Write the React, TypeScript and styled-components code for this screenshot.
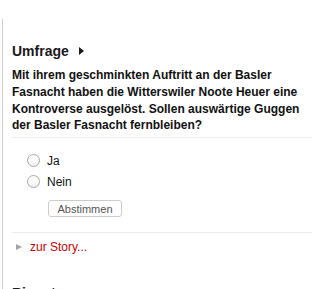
import styled, { createGlobalStyle } from "styled-components";

const GlobalStyle = createGlobalStyle`
  html, body {
    margin: 0;
    padding: 0;
    background: #fff;
  }
  body {
    font-family: "Liberation Sans", Arial, sans-serif;
    color: #000;
    overflow: hidden;
  }
`;

const Column = styled.div`
  box-sizing: border-box;
  margin: 19px 0 0 2px;
  border-left: 1px solid #cfcfcf;
  padding: 24px 6px 0 9px;
  height: 270px;
  overflow: hidden;
`;

const Title = styled.h2`
  display: flex;
  align-items: center;
  gap: 10px;
  margin: 0;
  font-size: 14px;
  line-height: 16px;
  font-weight: bold;
  color: #1a1a1a;
`;

const TitleArrow = styled.span`
  width: 0;
  height: 0;
  border-top: 4px solid transparent;
  border-bottom: 4px solid transparent;
  border-left: 5px solid #1a1a1a;
`;

const Question = styled.p`
  margin: 8px 0 3px;
  font-size: 12px;
  line-height: 16.8px;
  font-weight: bold;
  color: #111;
`;

const Divider = styled.div`
  height: 1px;
  background: #ebebeb;
`;

const Options = styled.div`
  display: flex;
  flex-direction: column;
  padding: 12px 0 0 15px;
`;

const Option = styled.label`
  display: flex;
  align-items: center;
  gap: 7px;
  height: 21px;
  font-size: 12px;
  color: #111;
`;

const Radio = styled.span`
  box-sizing: border-box;
  width: 13px;
  height: 13px;
  border-radius: 50%;
  border: 1px solid #a8a8a8;
  background: linear-gradient(#ffffff, #f3f3f3);
`;

const VoteButton = styled.button`
  box-sizing: border-box;
  margin: 8px 0 15px 21px;
  align-self: flex-start;
  width: 74px;
  height: 17px;
  padding: 0;
  border: 1px solid #cccccc;
  border-radius: 3px;
  background: #fff;
  font-family: "Liberation Sans", Arial, sans-serif;
  font-size: 11px;
  color: #555;
`;

const StoryLink = styled.a`
  display: flex;
  align-items: center;
  gap: 8px;
  margin: 6px 0 0 4px;
  font-size: 12px;
  line-height: 16px;
  color: #cc0000;
  text-decoration: none;
`;

const StoryArrow = styled.span`
  width: 0;
  height: 0;
  border-top: 3.5px solid transparent;
  border-bottom: 3.5px solid transparent;
  border-left: 6px solid #a3a3a3;
`;

const NextTitle = styled.h2`
  margin: 30px 0 0;
  font-size: 14px;
  line-height: 16px;
  font-weight: bold;
  color: #1a1a1a;
`;

function App() {
  return (
    <>
      <GlobalStyle />
      <Column>
        <Title>
          Umfrage
          <TitleArrow />
        </Title>
        <Question>
          Mit ihrem geschminkten Auftritt an der Basler Fasnacht haben die
          Witterswiler Noote Heuer eine Kontroverse ausgelöst. Sollen
          auswärtige Guggen der Basler Fasnacht fernbleiben?
        </Question>
        <Divider />
        <Options>
          <Option>
            <Radio />
            Ja
          </Option>
          <Option>
            <Radio />
            Nein
          </Option>
          <VoteButton>Abstimmen</VoteButton>
        </Options>
        <Divider />
        <StoryLink href="#">
          <StoryArrow />
          zur Story...
        </StoryLink>
        <NextTitle>Ringstrasse</NextTitle>
      </Column>
    </>
  );
}

export default App;
